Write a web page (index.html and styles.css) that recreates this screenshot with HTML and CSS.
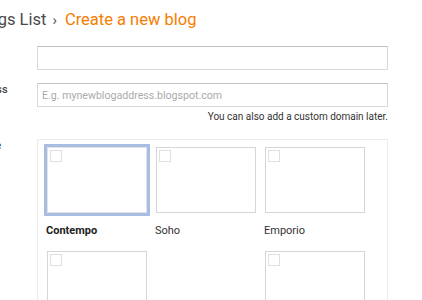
FILE: index.html
```html
<!DOCTYPE html>
<html lang="en">
<head>
  <meta charset="UTF-8">
  <meta name="viewport" content="width=device-width, initial-scale=1.0">
  <link rel="stylesheet" href="styles.css">
  <title>Create a new blog</title>
</head>
<body>
  <div class="page">
    <header class="crumbs">
      <span class="crumb">Blogs List</span>
      <span class="sep">›</span>
      <span class="current">Create a new blog</span>
    </header>

    <form class="form">
      <div class="row">
        <label class="label" for="title">Title</label>
        <div class="field">
          <input class="text-input" id="title" type="text">
        </div>
      </div>

      <div class="row">
        <label class="label" for="address">Address</label>
        <div class="field">
          <input class="text-input" id="address" type="text" placeholder="E.g. mynewblogaddress.blogspot.com">
          <div class="hint">You can also add a custom domain later.</div>
        </div>
      </div>

      <div class="row theme-row">
        <div class="label">Theme</div>
        <div class="field">
          <div class="themes">
            <div class="theme selected">
              <div class="thumb"><span class="check"></span></div>
              <div class="theme-name">Contempo</div>
            </div>
            <div class="theme">
              <div class="thumb"><span class="check"></span></div>
              <div class="theme-name">Soho</div>
            </div>
            <div class="theme">
              <div class="thumb"><span class="check"></span></div>
              <div class="theme-name">Emporio</div>
            </div>
            <div class="theme">
              <div class="thumb"><span class="check"></span></div>
              <div class="theme-name">Notable</div>
            </div>
            <div class="theme empty"></div>
            <div class="theme">
              <div class="thumb"><span class="check"></span></div>
              <div class="theme-name">Essential</div>
            </div>
          </div>
        </div>
      </div>
    </form>
  </div>
</body>
</html>
```

FILE: styles.css
```css
body {
  margin: 0;
  padding: 0;
  background-color: #fff;
  font-family: Roboto, "Liberation Sans", Arial, sans-serif;
  color: #333;
  overflow: hidden;
}

.page {
  margin-left: -33px;
  width: 430px;
}

.crumbs {
  display: flex;
  align-items: baseline;
  height: 40px;
  padding: 10px 0 0 7px;
  box-sizing: border-box;
  font-size: 16.5px;
}

.crumb {
  color: #4a4a4a;
}

.sep {
  color: #555;
  margin: 0 8px 0 6px;
  font-size: 15px;
}

.current {
  color: #f57d00;
}

.form {
  padding-top: 6px;
}

.row {
  display: flex;
  margin-bottom: 13px;
}

.label {
  width: 70px;
  flex-shrink: 0;
  font-size: 11px;
  font-weight: 500;
  color: #444;
}

.field {
  width: 351px;
}

.text-input {
  display: block;
  width: 100%;
  height: 24px;
  box-sizing: border-box;
  margin: 0;
  padding: 0 4px;
  border: 1px solid #d9d9d9;
  border-top-color: #c0c0c0;
  border-radius: 1px;
  font-family: inherit;
  font-size: 10.6px;
  color: #333;
  outline: none;
}

.text-input::placeholder {
  color: #aaa;
}

.hint {
  margin-top: 4px;
  text-align: right;
  font-size: 10px;
  color: #333;
}

.theme-row {
  margin-top: 17px;
}

.theme-row .label {
  padding-top: 0;
}

.themes {
  display: grid;
  grid-template-columns: repeat(3, 109px);
  row-gap: 7px;
  padding: 4px 0 0 6px;
  border: 1px solid #ebebeb;
  min-height: 200px;
}

.theme {
  width: 106px;
}

.thumb {
  position: relative;
  width: 100px;
  height: 66px;
  border: 3px solid transparent;
  box-sizing: content-box;
}

.thumb::before {
  content: "";
  position: absolute;
  inset: 0;
  border: 1px solid #d6d6d6;
}

.selected .thumb {
  border-color: #a8bde2;
}

.selected .thumb::before {
  border-color: #e2e2e2;
}

.check {
  position: absolute;
  top: 3px;
  left: 3px;
  width: 12px;
  height: 12px;
  border: 1px solid #e0e0e0;
  box-sizing: border-box;
}

.theme-name {
  padding: 8px 0 0 2px;
  font-size: 11px;
  color: #333;
  height: 14px;
}

.selected .theme-name {
  font-weight: 700;
  color: #222;
}
```
